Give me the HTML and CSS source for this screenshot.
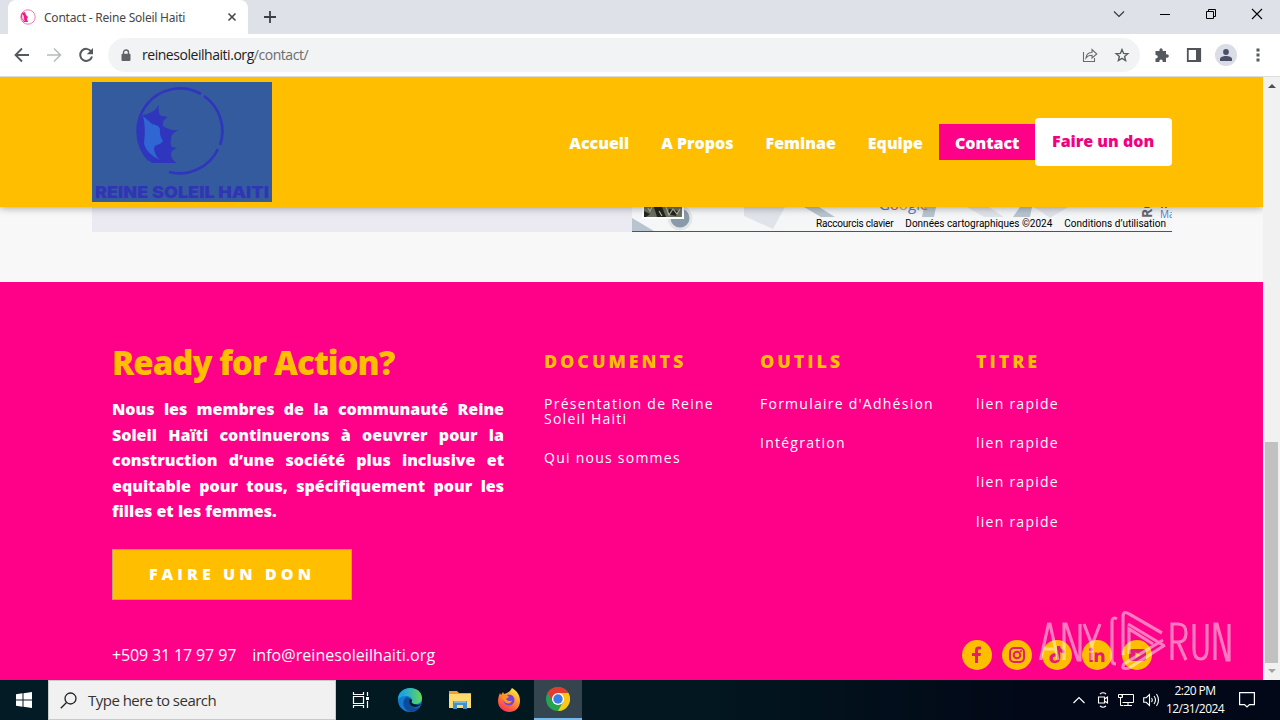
FILE: index.html
```html
<!DOCTYPE html>
<html lang="fr">
	<head>
		<meta charset="UTF-8" />
		<title>Contact - Reine Soleil Haiti</title>
		<link rel="stylesheet" href="styles.css">
	</head>
	<body>
		<!-- browser tabs -->
		<div class="tabstrip">
			<div class="tab">
				<svg class="favicon" width="16" height="16" viewBox="0 0 16 16"><circle cx="8" cy="8" r="7.2" fill="none" stroke="#f27bb4" stroke-width="1"/><path d="M2 4l3-1 1 3 2 2-1 2 1 3H4Q-1 9 2 4z" fill="#ed1e86"/><path d="M2 5l2 2v3l1 2Q1 11 2 5z" fill="#ffc4dc"/></svg>
				<span class="tab-title">Contact - Reine Soleil Haiti</span>
				<svg width="10" height="10" viewBox="0 0 10 10"><path d="M1.500 1.500l7 7M8.500 1.500l-7 7" stroke="#45494d" stroke-width="1.600"/></svg>
			</div>
			<svg class="new-tab" width="14" height="14" viewBox="0 0 14 14"><path d="M7 1v12M1 7h12" stroke="#3c4043" stroke-width="1.800"/></svg>
			<div class="window-buttons">
				<svg width="12" height="12" viewBox="0 0 12 12"><path d="M1 3.500l5 5 5-5" fill="none" stroke="#333" stroke-width="1.100"/></svg>
				<svg width="12" height="12" viewBox="0 0 12 12"><path d="M1 6.500h10" stroke="#000"/></svg>
				<svg width="12" height="12" viewBox="0 0 12 12"><path d="M1.500 3.500h7v7h-7zM3.500 3.500v-2h7v7h-2" fill="none" stroke="#000"/></svg>
				<svg width="12" height="12" viewBox="0 0 12 12"><path d="M1 1l10 10M11 1L1 11" stroke="#000" stroke-width="1.100"/></svg>
			</div>
		</div>

		<!-- address bar -->
		<div class="toolbar">
			<div class="nav-buttons">
				<svg width="16" height="16" viewBox="0 0 16 16"><path d="M15 8H2M8 1.500L1.500 8 8 14.500" fill="none" stroke="#55585c" stroke-width="1.800"/></svg>
				<svg width="16" height="16" viewBox="0 0 16 16"><path d="M1 8h13M8 1.500L14.500 8 8 14.500" fill="none" stroke="#b9bbbe" stroke-width="1.600"/></svg>
				<svg width="16" height="16" viewBox="0 0 16 16"><path d="M13.200 4.500A6 6 0 1 0 14 9.500" fill="none" stroke="#55585c" stroke-width="2"/><path d="M15 1v6.200H8.800z" fill="#55585c"/></svg>
			</div>
			<div class="omnibox">
				<svg width="10" height="13" viewBox="0 0 10 13"><path d="M2.500 5V3.500a2.500 2.500 0 0 1 5 0V5" fill="none" stroke="#5f6368" stroke-width="1.400"/><rect x="0.500" y="4.800" width="9" height="7.200" rx="1" fill="#5f6368"/></svg>
				<span class="url">reinesoleilhaiti.org<span>/contact/</span></span>
				<svg width="16" height="16" viewBox="0 0 16 16"><path d="M1.500 5v9.500h11V11M4 11c.5-4 2.500-5.500 6-5.500V2.500L14.800 7 10 11V8.300c-3 0-4.500.7-6 2.700z" fill="none" stroke="#696d71" stroke-width="1.100"/></svg>
				<svg class="star" width="16" height="16" viewBox="0 0 16 16"><path d="M8 2.500l1.600 3.900 4.200.3-3.200 2.700 1 4.100L8 11.300l-3.600 2.200 1-4.100-3.200-2.700 4.200-.3z" fill="none" stroke="#5a5e62" stroke-width="1.400"/></svg>
			</div>
			<div class="extensions">
				<svg width="16" height="16" viewBox="0 0 16 16"><path d="M1.500 4h4C4.800 .2 9.200 .2 8.700 4H12v3.300c3.800-.6 3.800 4 0 3.500V15H8.700c.2-3.200-3.500-3.200-3.300 0H1.500v-3.600c3 .2 3-3.600 0-3.500z" fill="#55585c"/></svg>
				<svg width="16" height="16" viewBox="0 0 16 16"><path d="M1.800 2h12.400v12H1.800z" fill="#fff" stroke="#505357" stroke-width="1.800"/><path d="M10 2h4v12h-4z" fill="#505357"/></svg>
				<span class="avatar"><svg width="14" height="14" viewBox="0 0 14 14"><circle cx="7" cy="4" r="2.900" fill="#4b4f6b"/><path d="M1 13v-2c0-4 12-4 12 0v2z" fill="#4b4f6b"/></svg></span>
				<svg class="menu" width="4" height="14" viewBox="0 0 4 14"><path d="M.5.500h3v3h-3zM.5 5.500h3v3h-3zM.5 10.500h3v3h-3z" fill="#55585c"/></svg>
			</div>
		</div>

		<div class="viewport">
			<div class="page">
				<header class="site-header">
					<div class="logo">
						<svg width="180" height="120" viewBox="0 0 180 120">
							<path d="M109 12A42.500 42.500 0 0 0 57 78M112 14A42.500 42.500 0 0 1 128 63M126 67A42.500 42.500 0 0 1 77 90" fill="none" stroke="#3035bd" stroke-width="2.700"/>
							<path d="M51 33Q62 31 67 23q-1 6 1 10.500l8 1.500q-6 3-5 9 7 5 16 4-8 3-8 9-1 5 1 8l5 1q-6 2-6 6 0 6 6 9H60Q46 71 45 49q2-12 6-16z" fill="#3035bd"/>
							<path d="M51 34l9 8q7 1 8 5-1 6 3 12l-3 3q-6 1-6 5 1 7 6 11-13-6-16-16 2-17-1-28z" fill="#2f66d4"/>
							<text x="3" y="116" textLength="174" lengthAdjust="spacingAndGlyphs" class="logo-text">REINE SOLEIL HAITI</text>
						</svg>
					</div>
					<nav>
						<a>Accueil</a>
						<a>A Propos</a>
						<a>Feminae</a>
						<a>Equipe</a>
						<a class="active">Contact</a>
						<a class="donate">Faire un don</a>
					</nav>
				</header>

				<section class="contact">
					<div class="form-side"></div>
					<div class="map">
						<svg class="map-art" width="540" height="24" viewBox="0 0 540 24">
							<path d="M0 11l22 13H0zM172 0h15l16 10h-14zM292 0h12l-2 10h-12zM388 0h12l-2 10h-17z" fill="#b8c5cf"/>
							<path d="M112 0h41l-12 22-29-13zM335 0h22l15 10h-20zM402 0h34l-18 11z" fill="#e1e3ea"/>
							<circle cx="48" cy="11" r="11" fill="#899aa8" stroke="#e2e6e9" stroke-width="3"/>
							<path d="M10 0h42v12H10z" fill="#fff"/>
							<path d="M12 0h38v10H12z" fill="#6d7061"/>
							<path d="M22 0h8l4 10h-9zM37 2l9 2-2 5-8-2zM12 4l6 3-4 3h-2z" fill="#22261c"/>
							<path d="M16 1l2 3 2-4M27 4l3 5M34 0l3 8 4-6 4 5 3-5" fill="none" stroke="#aeb5a0" stroke-width="1.200"/>
							<text x="247" y="3" class="google"><tspan fill="#4a7fd3">G</tspan><tspan fill="#d9604b">o</tspan><tspan fill="#e4aa2c">o</tspan><tspan fill="#4a7fd3">g</tspan><tspan fill="#4a9b5c">l</tspan><tspan fill="#d9604b">e</tspan></text>
							<text transform="translate(520 11) rotate(-90)" class="road">RO</text>
							<path d="M529 0h2M533 0h2" stroke="#5386d8" stroke-width="2"/>
							<text x="528" y="11" class="place">Ma</text>
						</svg>
						<div class="map-links">
							<span class="shortcuts">Raccourcis clavier</span>
							<span>Données cartographiques ©2024</span>
							<span>Conditions d’utilisation</span>
						</div>
					</div>
				</section>

				<footer class="site-footer">
					<div class="columns">
						<div class="about">
							<h2>Ready for Action?</h2>
							<p>Nous les membres de la communauté Reine Soleil Haïti continuerons à oeuvrer pour la construction d’une société plus inclusive et equitable pour tous, spécifiquement pour les filles et les femmes.</p>
							<a class="cta">FAIRE UN DON</a>
						</div>
						<div class="links">
							<h3>DOCUMENTS</h3>
							<a>Présentation de Reine Soleil Haiti</a>
							<a>Qui nous sommes</a>
						</div>
						<div class="links">
							<h3>OUTILS</h3>
							<a>Formulaire d'Adhésion</a>
							<a>Intégration</a>
						</div>
						<div class="links">
							<h3>TITRE</h3>
							<a>lien rapide</a>
							<a>lien rapide</a>
							<a>lien rapide</a>
							<a>lien rapide</a>
						</div>
					</div>
					<div class="bottom">
						<span class="phone">+509 31 17 97 97</span>
						<span class="mail">info@reinesoleilhaiti.org</span>
						<div class="social">
							<svg width="30" height="30" viewBox="0 0 30 30"><circle cx="15" cy="15" r="15"/><path d="M13 23v-7h-3v-3h3v-2.500C13 7.500 14.500 6 19 6.800V9.500c-2.400-.2-3 .2-3 1.500v2h3l-.5 3H16v7z" class="mark"/></svg>
							<svg width="30" height="30" viewBox="0 0 30 30"><circle cx="15" cy="15" r="15"/><g class="line"><rect x="8" y="8" width="14" height="14" rx="4"/><circle cx="15" cy="15" r="3.300"/></g><circle cx="19" cy="11" r="1" class="mark"/></svg>
							<svg width="30" height="30" viewBox="0 0 30 30"><circle cx="15" cy="15" r="15"/><path d="M15 6h3.200c.2 2.600 1.800 4 4.300 4.200v3.200c-1.700 0-3-.5-4.200-1.300v6c0 6.400-9.700 7-10.800 1.200-.6-4 2.700-6.600 6.500-6v3.400c-3.500-.8-4.200 3.600-1.300 4 1.500.1 2.300-1 2.300-2.700z" class="mark"/></svg>
							<svg width="30" height="30" viewBox="0 0 30 30"><circle cx="15" cy="15" r="15"/><path d="M7.500 12.500h3.200V22H7.500zM12.700 12.500h3v1.300c2-2.600 6.800-2 6.800 2.600V22h-3.200v-5c0-2.700-3.400-2.600-3.400 0v5h-3.200z" class="mark"/><circle cx="9.100" cy="9.500" r="1.900" class="mark"/></svg>
							<svg width="30" height="30" viewBox="0 0 30 30"><circle cx="15" cy="15" r="15"/><rect x="7" y="9" width="17" height="12" rx="3" class="mark"/><path d="M13.500 12.300v5.400l5-2.700z"/></svg>
						</div>
					</div>
				</footer>

				<svg class="watermark" width="194" height="64" viewBox="0 0 194 64">
					<g fill="none" stroke="#fff" stroke-width="3.200">
						<path d="M2.500 51L10.500 15h1.500L20 51M5 40h12M26 51V15h2l12 36h2V15M46 15l8 21v15M62 15l-8 21"/>
						<path d="M134 51V15h6q8 0 8 9t-8 9h-6M140 33l8 18M156 15v25q0 10 6.500 10t6.500-10V15M177 51V15h2l10 36h2V15"/>
						<path d="M79 10q-5-3-5 3v38q0 4 4 4M85 46V8q0-7 6-3l33 19M90 15l35 21M91 45V20l24 15M125 31L86 55q-4 6 5 4l36-23"/>
					</g>
				</svg>
			</div>
			<div class="scrollbar">
				<span class="arrow up"></span>
				<span class="thumb"></span>
				<span class="arrow down"></span>
			</div>
		</div>

		<div class="taskbar">
			<div class="start">
				<svg width="16" height="16" viewBox="0 0 16 16"><path d="M0 2.300L6.500 1.300v6.200H0zM7.500 1.200L16 0v7.500H7.500zM0 8.500h6.500v6.200L0 13.700zM7.500 8.500H16V16l-8.500-1.200z" fill="#fff"/></svg>
			</div>
			<div class="search">
				<svg width="17" height="17" viewBox="0 0 17 17"><circle cx="10.500" cy="6.500" r="5.500" fill="none" stroke="#222" stroke-width="1.300"/><path d="M6.500 10.500L.8 16.200" stroke="#222" stroke-width="1.300"/></svg>
				<span>Type here to search</span>
			</div>
			<div class="apps">
				<span><svg width="18" height="16" viewBox="0 0 18 16"><path d="M1.500 0v2.500h10V0M1.500 16v-2.500h10V16M1.500 4.500h10v7h-10zM15.500 0v4M15.500 9v7" fill="none" stroke="#fff" stroke-width="1.200"/><path d="M14 5h3v3h-3z" fill="#fff"/></svg></span>
				<span><svg width="24" height="24" viewBox="0 0 24 24">
					<defs><linearGradient id="edge" x1="0" y1="0" x2="1" y2="0"><stop offset="0.200" stop-color="#1ba4df"/><stop offset="1" stop-color="#63d957"/></linearGradient></defs>
					<circle cx="12" cy="12" r="12" fill="#1479d0"/><path d="M0 11C1-4 24-3 24 10c0 4-3 6-7 6-3 0-4-1-3-3 2-4-7-8-14-2z" fill="url(#edge)"/><path d="M9 9c-7 4-3 14 4 15 4 0 7-2 9-5-4 2-9 0-10-4-1-2 0-3 1-4z" fill="#0d4c9a"/><path d="M12 11c-2 4 1 8 5 8 3 0 5-2 7-3-2 1-8 1-10-1-1-1 0-2 0-3z" fill="#031c24"/></svg></span>
				<span><svg width="22" height="20" viewBox="0 0 22 20"><path d="M0 1h8l2 2h12v15H0z" fill="#e6a72e"/><path d="M0 4h22v14H0z" fill="#ffda6c"/><path d="M4 19v-8h14v8h-4v-4H8v4z" fill="#3f92ce"/><path d="M5 11h12v2H5z" fill="#76b9e3"/></svg></span>
				<span><svg width="24" height="24" viewBox="0 0 24 24">
					<defs><linearGradient id="fox" x1="0.800" y1="0" x2="0.200" y2="1"><stop offset="0" stop-color="#fff34b"/><stop offset="0.450" stop-color="#ff922a"/><stop offset="1" stop-color="#ff275e"/></linearGradient></defs>
					<path d="M3 5l1 2 2-3 1 2 3-1 3-2 2-3c5 3 8 7 8 13 0 15-22 14-22 0 0-3 1-6 2-8z" fill="url(#fox)"/><circle cx="12" cy="12" r="5.500" fill="#7545d8"/><path d="M5 8l5-1 2 2-3 2c2 3 6 2 6 1-1 6-9 4-10-4z" fill="#ff962a"/></svg></span>
				<span class="running"><svg width="24" height="24" viewBox="0 0 24 24"><circle cx="12" cy="12" r="12" fill="#24a451"/><path d="M1.600 6A12 12 0 0 1 22.400 6L17 15 12 12 7 15z" fill="#e33b2e"/><path d="M12 6h10.400A12 12 0 0 1 12 24l5-9z" fill="#fbc915"/><circle cx="12" cy="12" r="6" fill="#fff"/><circle cx="12" cy="12" r="4.700" fill="#397ee8"/></svg></span>
			</div>
			<div class="tray">
				<svg class="chevron" width="12" height="8" viewBox="0 0 12 8"><path d="M.5 7L6 1.500 11.500 7" fill="none" stroke="#fff" stroke-width="1.200"/></svg>
				<svg width="12" height="16" viewBox="0 0 12 16"><path d="M1.500 5h6v6h-6zM7.500 7l3-2v6l-3-2M3 2q3-2.500 6 0M3 14q3 2.500 6 0" fill="none" stroke="#fff" stroke-width="1.100"/></svg>
				<svg width="16" height="14" viewBox="0 0 16 14"><path d="M4 3.500V1.500h11.500v8H4.500M10 9.500v3M6 12.500h8M.5 1.500h4v3h-4zM2.500 4.500v8h3" fill="none" stroke="#fff"/></svg>
				<svg width="17" height="14" viewBox="0 0 17 14"><path d="M.7 4.700h2.500L6.500 1.500v11L3.200 9.300H.7zM8.500 5q1.500 2 0 4M11 3q3 4 0 8M13.500 1q4 6 0 12" fill="none" stroke="#fff" stroke-width="1.100"/></svg>
				<div class="clock"><span>2:20 PM</span><span>12/31/2024</span></div>
				<svg width="16" height="16" viewBox="0 0 16 16"><path d="M.6.600h14.800v12H10.500L8 15l-2.500-2.400H.6z" fill="none" stroke="#fff" stroke-width="1.200"/></svg>
			</div>
		</div>
	</body>
</html>
```
FILE: styles.css
```css
* {
	box-sizing: border-box;
}
body {
	margin: 0;
	width: 1280px;
	height: 720px;
	overflow: hidden;
	font-family: "Open Sans", sans-serif;
}
svg {
	display: block;
	flex: none;
}

/* browser window */
.tabstrip {
	display: flex;
	align-items: center;
	height: 34px;
	padding-left: 8px;
	background: #dee1e8;
}
.tab {
	display: flex;
	align-items: center;
	width: 240px;
	height: 34px;
	padding: 0 11px 0 12px;
	background: #fff;
	border-radius: 8px 8px 0 0;
}
.tab-title {
	flex: 1;
	margin-left: 8px;
	font-family: "Noto Sans", sans-serif;
	font-size: 12px;
	letter-spacing: -0.220px;
	color: #45474a;
}
.new-tab {
	margin-left: 15px;
}
.window-buttons {
	display: flex;
	gap: 34px;
	margin: -6px 17px 0 auto;
}
.toolbar {
	display: flex;
	align-items: center;
	height: 43px;
	background: #fff;
	border-bottom: 1px solid #dcdcdc;
}
.nav-buttons {
	display: flex;
	gap: 16px;
	margin-left: 14px;
}
.omnibox {
	display: flex;
	align-items: center;
	width: 1032px;
	height: 34px;
	margin-left: 14px;
	padding: 0 10px 0 13px;
	background: #f1f3f4;
	border-radius: 17px;
}
.url {
	flex: 1;
	margin: -1px 0 0 11px;
	font-size: 14px;
	letter-spacing: -0.460px;
	color: #202124;
}
.url span {
	color: #6a6d70;
}
.star {
	margin-left: 16px;
}
.extensions {
	display: flex;
	align-items: center;
	gap: 16px;
	margin-left: 14px;
}
.avatar {
	display: flex;
	align-items: center;
	justify-content: center;
	width: 22px;
	height: 22px;
	margin: 0 0 0 -3px;
	background: #dadce6;
	border-radius: 50%;
}
.menu {
	margin-left: 3px;
}
.viewport {
	display: flex;
	height: 603px;
}
.page {
	position: relative;
	width: 1263px;
	overflow: hidden;
	background: #f8f8f8;
}
.scrollbar {
	display: flex;
	flex-direction: column;
	align-items: center;
	width: 17px;
	background: #f1f1f1;
}
.arrow {
	border: 4px solid transparent;
}
.up {
	margin-top: 3px;
	border-bottom-color: #505050;
}
.thumb {
	width: 13px;
	height: 221px;
	margin-top: 354px;
	background: #c1c1c1;
}
.down {
	margin-top: 6px;
	border-top-color: #a3a3a3;
}

/* site header */
.site-header {
	position: relative;
	z-index: 1;
	display: flex;
	align-items: center;
	justify-content: space-between;
	height: 130px;
	padding: 0 91px 0 92px;
	background: #ffbf00;
	box-shadow: 0 1px 8px rgba(0, 0, 0, 0.35);
}
.logo {
	width: 180px;
	height: 120px;
	background: #345b9e;
}
.logo-text {
	font: 900 16px Inter, sans-serif;
	fill: #3035b5;
}
nav {
	display: flex;
	align-items: center;
	font-size: 16px;
	font-weight: 800;
	line-height: 36px;
	color: #fff;
}
nav a {
	padding: 2px 16px 0;
	white-space: nowrap;
}
.active {
	width: 96px;
	height: 36px;
	background: #ff0089;
	letter-spacing: -0.050px;
	line-height: 34px;
}
.donate {
	width: 137px;
	height: 48px;
	padding: 0 17px;
	background: #fff;
	border-radius: 4px;
	line-height: 46px;
	color: #f1007f;
}

/* contact section */
.contact {
	display: flex;
	height: 75px;
	padding: 0 91px 50px 92px;
}
.form-side {
	width: 540px;
	background: #ebe9f2;
}
.map {
	position: relative;
	width: 540px;
	background: #f5f6f7;
	border-bottom: 1px solid #e6007c;
	overflow: hidden;
}
.map-links {
	position: absolute;
	right: 0;
	bottom: 0;
	display: flex;
	gap: 12px;
	padding-right: 6px;
	font: 10px/14px Roboto, sans-serif;
	color: #000;
	white-space: nowrap;
}
.shortcuts {
	letter-spacing: -0.200px;
}
.google {
	font: 500 15px "Open Sans", sans-serif;
}
.road {
	font: bold 14px "Open Sans", sans-serif;
	fill: #626873;
}
.place {
	font: 10px "Open Sans", sans-serif;
	fill: #4f82d9;
}

/* footer */
.site-footer {
	height: 398px;
	padding: 60px 111px 0 112px;
	background: #ff0089;
	color: #fff;
}
.columns {
	display: flex;
	height: 298px;
}
.about {
	flex: none;
	width: 392px;
	margin-right: 40px;
}
.about h2 {
	margin: 0;
	font-size: 33px;
	font-weight: 800;
	line-height: 42px;
	letter-spacing: -1px;
	color: #ffbf00;
	white-space: nowrap;
}
.about p {
	margin: 13px 0 24px;
	font-size: 16px;
	font-weight: 800;
	line-height: 25.6px;
	text-align: justify;
}
.cta {
	display: block;
	width: 240px;
	height: 51px;
	background: #ffbf00;
	border: 1px solid #b5a26c;
	font-size: 16px;
	font-weight: 800;
	line-height: 49px;
	letter-spacing: 4.100px;
	text-indent: 0;
	text-align: center;
}
.links {
	flex: none;
	width: 216px;
	padding-right: 36px;
}
.links h3 {
	margin: 8px 0 24px;
	font-size: 18px;
	font-weight: 800;
	line-height: 22px;
	letter-spacing: 2.900px;
	color: #ffbf00;
}
.links a {
	display: block;
	margin-bottom: 24.200px;
	font-size: 14px;
	line-height: 15px;
	letter-spacing: 1.250px;
}
.bottom {
	display: flex;
	align-items: center;
	height: 30px;
	font-size: 16px;
}
.phone {
	letter-spacing: -0.140px;
}
.mail {
	margin-left: 16px;
	letter-spacing: 0.060px;
}
.social {
	display: flex;
	gap: 10px;
	margin-left: auto;
	fill: #ffbf00;
}
.social .mark {
	fill: #e41c75;
}
.social .line {
	fill: none;
	stroke: #e41c75;
	stroke-width: 2;
}
.watermark {
	position: absolute;
	left: 1038px;
	top: 532px;
	opacity: 0.48;
}

/* taskbar */
.taskbar {
	display: flex;
	height: 40px;
	background: linear-gradient(90deg, #031b24, #021720 55%, #020817 80%);
	color: #fff;
}
.start {
	display: flex;
	align-items: center;
	justify-content: center;
	width: 48px;
}
.search {
	display: flex;
	align-items: center;
	gap: 11px;
	width: 288px;
	padding-left: 11px;
	background: #f1f1f1;
	border: 1px solid #cacaca;
	font-size: 15px;
	letter-spacing: -0.520px;
	color: #333;
}
.apps {
	display: flex;
}
.apps span {
	display: flex;
	align-items: center;
	justify-content: center;
	width: 49.500px;
	height: 40px;
}
.apps .running {
	width: 48px;
	background: #35454f;
	border-bottom: 2px solid #76b9ed;
}
.tray {
	display: flex;
	align-items: center;
	gap: 9px;
	margin-left: auto;
	padding-right: 25px;
}
.chevron {
	margin-right: 3px;
}
.clock {
	display: flex;
	flex-direction: column;
	align-items: center;
	width: 58px;
	margin: 0 6px 0 -3px;
	font-size: 12px;
	line-height: 18px;
	letter-spacing: -0.550px;
}
```
